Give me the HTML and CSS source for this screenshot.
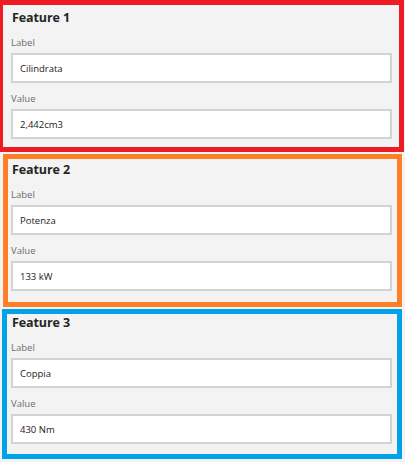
FILE: index.html
```html
<!DOCTYPE html>
<html lang="it">
<head>
<meta charset="utf-8">
<title>Features</title>
<link rel="stylesheet" href="styles.css">
</head>
<body>
<div class="page">
  <section class="feature">
    <h2 class="title">Feature 1</h2>
    <div class="field-label">Label</div>
    <div class="input">Cilindrata</div>
    <div class="field-label">Value</div>
    <div class="input">2,442cm3</div>
  </section>
  <section class="feature feature-mid">
    <h2 class="title">Feature 2</h2>
    <div class="field-label">Label</div>
    <div class="input">Potenza</div>
    <div class="field-label">Value</div>
    <div class="input">133 kW</div>
  </section>
  <section class="feature">
    <h2 class="title">Feature 3</h2>
    <div class="field-label">Label</div>
    <div class="input">Coppia</div>
    <div class="field-label">Value</div>
    <div class="input">430 Nm</div>
  </section>

  <div class="frame frame-red"></div>
  <div class="frame frame-orange"></div>
  <div class="frame frame-blue"></div>
</div>
</body>
</html>
```

FILE: styles.css
```css
html, body {
  margin: 0;
  padding: 0;
  background: #f3f3f3;
}

.page {
  position: relative;
  width: 405px;
  height: 462px;
  overflow: hidden;
  font-family: "Open Sans", "Noto Sans", sans-serif;
}

.feature {
  box-sizing: border-box;
  height: 152px;
  padding: 8px 13px 0 11px;
  display: flex;
  flex-direction: column;
}

.feature-mid {
  height: 153px;
}

.title {
  margin: 0 0 0 1px;
  font-size: 12.5px;
  line-height: 20px;
  font-weight: 700;
  letter-spacing: -0.1px;
  color: #252525;
}

.field-label {
  margin-top: 8px;
  font-size: 9.5px;
  line-height: 14px;
  color: #6c6c6c;
}

.input + .field-label {
  margin-top: 9px;
}

.input {
  box-sizing: border-box;
  margin-top: 3px;
  height: 30px;
  background: #ffffff;
  border: 2px solid #d3d3d3;
  padding-left: 7px;
  display: flex;
  align-items: center;
  font-size: 9.5px;
  color: #222222;
}

.frame {
  position: absolute;
  box-sizing: border-box;
  border: 5px solid;
  pointer-events: none;
}

.frame-red {
  left: -2px;
  top: 0;
  width: 406px;
  height: 152px;
  border-color: #ed1c24;
}

.frame-orange {
  left: 3px;
  top: 154px;
  width: 399px;
  height: 153px;
  border-color: #ff7f27;
}

.frame-blue {
  left: 2px;
  top: 309px;
  width: 400px;
  height: 150px;
  border-color: #00a2e8;
}
```
